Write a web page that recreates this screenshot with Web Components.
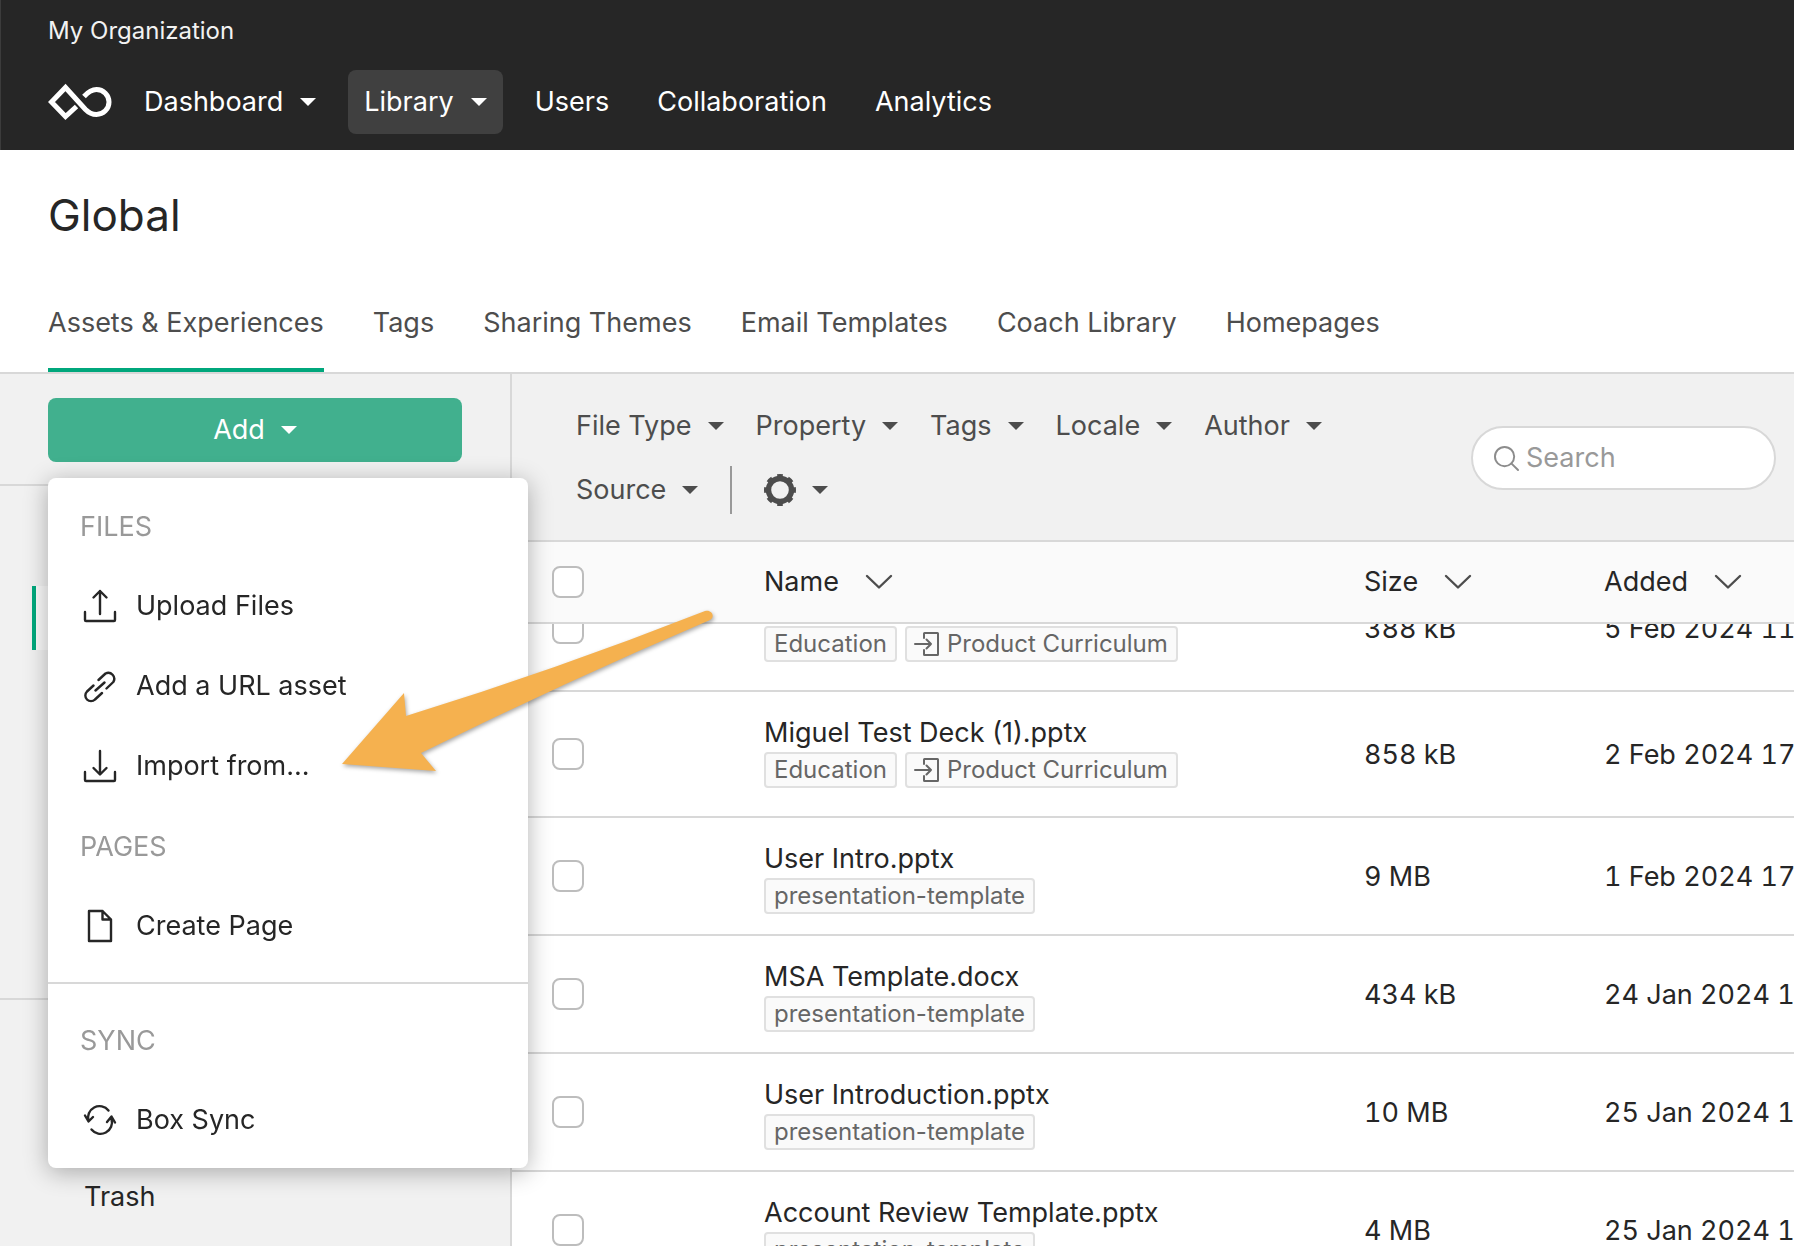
<!DOCTYPE html>
<html lang="en">
<head>
<meta charset="utf-8">
<meta name="viewport" content="width=device-width, initial-scale=1">
<title>Global</title>
<style>
html, body { margin: 0; height: 100%; }
body { font: 27px/40px Inter, "Liberation Sans", sans-serif; color: #262626; background: #fff; overflow: hidden; --line: #d8d8d8; --green: #00a77c; --panel: #f1f1f1; --muted: #4d4d4d; }
</style>
</head>
<body>
<library-app></library-app>
<script>
const ICONS = {
  none: ['0 0 32 32', ''],
  logo: ['0 0 64 36', '<path d="M28.5 22.5 17.5 32.5 3.5 18 17.5 3.5 37.5 25.5C40.500 28.600 44.500 30.500 48.500 30.500A12.500 12.500 0 1 0 48.500 5.500C44 5.500 40.500 7.500 36 12.500" stroke-width="5"/>'],
  caret: ['0 0 16 8', '<path d="M0 0H16L8 8Z" fill="currentColor" stroke="none"/>'],
  chevron: ['0 0 26 14', '<path d="M1 1 13 12.500 25 1" stroke-width="2.400"/>'],
  upload: ['0 0 32 32', '<path d="M16 24V1M9.500 7.500 16 1 22.500 7.500M1 22V30Q1 31 2 31H30Q31 31 31 30V22"/>'],
  download: ['0 0 32 32', '<path d="M16 1V24M9.500 18 16 24.500 22.500 18M1 22V30Q1 31 2 31H30Q31 31 31 30V22"/>'],
  link: ['0 0 32 32', '<path d="M11.500 20.500 20.500 12.500M14.500 10 21.500 3.500A6 6 0 0 1 29.300 12L22.500 18.500M9.500 15.500 3 21.500A5.500 5.500 0 0 0 11 29.500L18 23"/>'],
  page: ['0 0 32 32', '<path d="M5 1H18.500L27 9.500V31H5ZM18.500 1V9.500H27"/>'],
  sync: ['0 0 32 32', '<path d="M4.500 17A11.500 11.500 0 0 1 24.500 6.500M1 11.500 4.500 17.500 9 13M27.500 15A11.500 11.500 0 0 1 7.500 25.500M23 18 27.500 12.500 31 18.500"/>'],
  search: ['0 0 26 26', '<circle cx="11" cy="11" r="10" stroke-width="2"/><path d="M18 18 25 25" stroke-width="2"/>'],
  enter: ['0 0 24 24', '<path d="M9 6V1.500Q9 1 9.500 1H22.500Q23 1 23 1.500V22.500Q23 23 22.500 23H9.500Q9 23 9 22.500V18M0 12H16M11.500 7.500 16 12 11.500 16.500" stroke-width="2"/>'],
  gear: ['0 0 32 32', '<circle cx="16" cy="16" r="11.500" stroke-width="5.400"/><circle cx="16" cy="16" r="14.200" stroke-width="3.600" pathLength="80" stroke-linecap="butt" stroke-dasharray="5 5" stroke-dashoffset="2.500"/>']
};

function define(name, html, setup) {
  const template = document.createElement('template');
  template.innerHTML = html;
  customElements.define(name, class extends HTMLElement {
    constructor() {
      super();
      this.attachShadow({ mode: 'open' }).append(template.content.cloneNode(true));
    }
    connectedCallback() { if (setup) setup(this, this.shadowRoot); }
  });
}

const BUTTON = 'button{font:inherit;color:inherit;background:none;border:0;margin:0;padding:0;display:flex;align-items:center;gap:16px;cursor:pointer;white-space:nowrap}';

define('ui-icon', `<style>:host{display:block;flex:none;width:32px}svg{display:block;width:100%;overflow:visible;fill:none;stroke:currentColor;stroke-width:2.400;stroke-linecap:round;stroke-linejoin:round}
:host([name=logo]) svg{stroke-linecap:butt;stroke-linejoin:miter}
:host([name=logo]){width:64px}:host([name=caret]){width:16px}:host([name=chevron]){width:26px}:host([name=search]){width:25px}:host([name=enter]){width:24px}</style><svg aria-hidden="true"></svg>`,
  (el, root) => {
    const [box, shapes] = ICONS[el.getAttribute('name') || 'none'];
    const svg = root.querySelector('svg');
    svg.setAttribute('viewBox', box);
    svg.innerHTML = shapes;
  });

define('nav-item', `<style>:host{display:block}${BUTTON} button{height:64px;padding:0 16px;gap:17px;border-radius:8px}:host([active]) button{background:#404040}ui-icon{display:none}:host([menu]) ui-icon{display:block}</style>
<button><slot></slot><ui-icon name="caret"></ui-icon></button>`);

define('top-bar', `<style>:host{display:block;height:150px;box-sizing:border-box;background:#262626;color:#fff;border-left:1px solid #3c3c3c;padding:11px 48px 0 47px}
.org{font-size:24px;line-height:40px;color:#f2f2f2}nav{display:flex;align-items:center;gap:16px;margin-top:19px}</style>
<div class="org">My Organization</div>
<nav><ui-icon name="logo"></ui-icon><nav-item menu>Dashboard</nav-item><nav-item menu active>Library</nav-item><nav-item>Users</nav-item><nav-item>Collaboration</nav-item><nav-item>Analytics</nav-item></nav>`);

define('tab-link', `<style>:host{display:block}a{display:block;padding:27px 0 25px;border-bottom:4px solid transparent;color:var(--muted);text-decoration:none;white-space:nowrap}:host([active]) a{border-color:var(--green)}</style><a href="#"><slot></slot></a>`);

define('page-head', `<style>:host{display:block;padding:37px 48px 0;border-bottom:2px solid var(--line)}h1{margin:0;font-size:44px;line-height:56px;font-weight:400;padding:0 0 33px}nav{display:flex;gap:49px}</style>
<h1>Global</h1>
<nav><tab-link active>Assets &amp; Experiences</tab-link><tab-link>Tags</tab-link><tab-link>Sharing Themes</tab-link><tab-link>Email Templates</tab-link><tab-link>Coach Library</tab-link><tab-link>Homepages</tab-link></nav>`);

define('menu-item', `<style>:host{display:block}${BUTTON} button{height:80px;width:100%;padding:0 36px;gap:20px}</style><button role="menuitem"><ui-icon></ui-icon><slot></slot></button>`,
  (el, root) => {
    const icon = document.createElement('ui-icon');
    icon.setAttribute('name', el.getAttribute('icon'));
    root.querySelector('ui-icon').replaceWith(icon);
  });

define('add-menu', `<style>:host{display:block;background:#fff;border-radius:8px;box-shadow:0 4px 24px rgba(0,0,0,.3)}section{padding:8px 0}section:first-of-type{padding-bottom:16px}section+section{border-top:2px solid var(--line);padding-top:16px}h2{margin:0;padding:21px 32px 19px;font-size:27px;line-height:40px;font-weight:400;color:#999}</style>
<section><h2>FILES</h2><menu-item icon="upload">Upload Files</menu-item><menu-item icon="link">Add a URL asset</menu-item><menu-item icon="download">Import from...</menu-item>
<h2>PAGES</h2><menu-item icon="page">Create Page</menu-item></section>
<section><h2>SYNC</h2><menu-item icon="sync">Box Sync</menu-item></section>`);

define('side-bar', `<style>:host{display:flex;flex-direction:column;width:512px;box-sizing:border-box;background:var(--panel);border-right:2px solid var(--line);flex:none}
.add{position:relative;padding:24px 48px 22px;border-bottom:2px solid var(--line)}${BUTTON}
.add button{width:414px;height:64px;justify-content:center;background:#41b08e;color:#fff;border-radius:8px}
add-menu{position:absolute;left:48px;top:104px;width:480px;z-index:5}
.tree{height:412px;padding-top:100px;border-bottom:2px solid var(--line)}
.current{height:64px;margin-left:32px;box-sizing:border-box;border-left:4px solid var(--green);background:#f9f9f9}
.more{padding:177px 84px 0}a{color:inherit;text-decoration:none}</style>
<div class="add"><button aria-haspopup="menu" aria-expanded="true">Add<ui-icon name="caret"></ui-icon></button><add-menu role="menu"></add-menu></div>
<div class="tree"><div class="current"></div></div>
<div class="more"><a href="#">Trash</a></div>`);

define('filter-button', `<style>:host{display:block}${BUTTON} button{height:64px}</style><button><slot></slot><ui-icon name="caret"></ui-icon></button>`);

define('search-box', `<style>:host{display:block;flex:none;width:305px}label{display:flex;align-items:center;gap:7px;box-sizing:border-box;height:64px;border:2px solid var(--line);border-radius:32px;background:#fff;padding:0 21px;color:#8c8c8c}input{flex:1;min-width:0;font:inherit;color:#262626;border:0;outline:0;padding:0;background:none}input::placeholder{color:#999;opacity:1}</style>
<label><ui-icon name="search"></ui-icon><input type="search" placeholder="Search" aria-label="Search"></label>`);

define('filter-bar', `<style>:host{display:flex;align-items:center;justify-content:space-between;background:var(--panel);border-bottom:2px solid var(--line);padding:20px 18px 18px 64px;color:var(--muted)}
.filters{display:flex;flex-wrap:wrap;align-items:center;column-gap:32px;max-width:800px}.rule{width:2px;height:48px;background:#999}</style>
<div class="filters"><filter-button>File Type</filter-button><filter-button>Property</filter-button><filter-button>Tags</filter-button><filter-button>Locale</filter-button><filter-button>Author</filter-button><filter-button>Source</filter-button><div class="rule"></div><filter-button aria-label="Settings"><ui-icon name="gear"></ui-icon></filter-button></div>
<search-box></search-box>`);

define('asset-tag', `<style>:host{display:flex;align-items:center;gap:8px;box-sizing:border-box;height:36px;border:2px solid #e0e0e0;border-radius:4px;background:#fafafa;color:#666;font-size:24px;line-height:32px;font-variant-numeric:normal;padding:0 8px;white-space:nowrap}ui-icon{display:none}:host([linked]) ui-icon{display:block}</style><ui-icon name="enter"></ui-icon><slot></slot>`);

const ROWS = [
  ['', ['Education', '>Product Curriculum'], '388 kB', '5 Feb 2024 11'],
  ['Miguel Test Deck (1).pptx', ['Education', '>Product Curriculum'], '858 kB', '2 Feb 2024 17'],
  ['User Intro.pptx', ['presentation-template'], '9 MB', '1 Feb 2024 17'],
  ['MSA Template.docx', ['presentation-template'], '434 kB', '24 Jan 2024 1'],
  ['User Introduction.pptx', ['presentation-template'], '10 MB', '25 Jan 2024 1'],
  ['Account Review Template.pptx', ['presentation-template'], '4 MB', '25 Jan 2024 1']
];
const tag = t => t[0] === '>' ? `<asset-tag linked>${t.slice(1)}</asset-tag>` : `<asset-tag>${t}</asset-tag>`;
const row = ([name, tags, size, added]) => `<tr><td class="pick"><input type="checkbox" aria-label="Select row"></td><td class="${tags.length > 1 ? 'tall' : ''}"><div class="name">${name}</div><div class="tags">${tags.map(tag).join('')}</div></td><td class="num">${size}</td><td class="num">${added}</td></tr>`;

define('asset-table', `<style>:host{display:block;flex:1;min-height:0;overflow:hidden;background:#fff}
table{width:100%;table-layout:fixed;border-collapse:separate;border-spacing:0}
th,td{text-align:left;font-weight:400;padding:0;border-bottom:2px solid var(--line);white-space:nowrap;vertical-align:middle}
thead th{position:sticky;top:0;height:80px;background:#fafafa;z-index:1}
.pick{padding-left:40px}.num{font-variant-numeric:tabular-nums;padding-top:2px}.c1{width:252px}.c3{width:240px}.c4{width:190px}
${BUTTON} th button{gap:27px}th ui-icon{color:#4d4d4d}
input{appearance:none;display:block;width:32px;height:32px;margin:0;box-sizing:border-box;border:2px solid #bdbdbd;border-radius:8px;background:#fff}
.name{height:39px;padding-top:21px}.tags{display:flex;gap:8px;padding-bottom:20px}.tall .tags{padding-bottom:28px}</style>
<table><colgroup><col class="c1"><col><col class="c3"><col class="c4"></colgroup>
<thead><tr><th class="pick"><input type="checkbox" aria-label="Select all"></th><th><button>Name<ui-icon name="chevron"></ui-icon></button></th><th><button>Size<ui-icon name="chevron"></ui-icon></button></th><th><button>Added<ui-icon name="chevron"></ui-icon></button></th></tr></thead>
<tbody>${ROWS.map(row).join('')}</tbody></table>`,
  el => { el.scrollTop = 58; requestAnimationFrame(() => { el.scrollTop = 58; }); });

define('callout-arrow', `<style>:host{display:block;width:372px;pointer-events:none}svg{display:block;width:100%;overflow:visible;filter:drop-shadow(1px 2px 2px rgba(0,0,0,.35))}</style>
<svg viewBox="0 0 372 162" aria-hidden="true"><path fill="#f5b14f" d="M0 154 62 83 64 106Q213 60 363 1C369-1 374 6 368 10Q223 72 79 143L94 161Z"/></svg>`);

define('library-app', `<style>:host{display:flex;flex-direction:column;height:100vh;position:relative;overflow:hidden}.body{display:flex;flex:1;min-height:0}main{display:flex;flex-direction:column;flex:1;min-width:0}callout-arrow{position:absolute;left:342px;top:610px;z-index:10}</style>
<top-bar></top-bar><page-head></page-head>
<div class="body"><side-bar></side-bar><main><filter-bar></filter-bar><asset-table></asset-table></main></div>
<callout-arrow></callout-arrow>`);
</script>
</body>
</html>
